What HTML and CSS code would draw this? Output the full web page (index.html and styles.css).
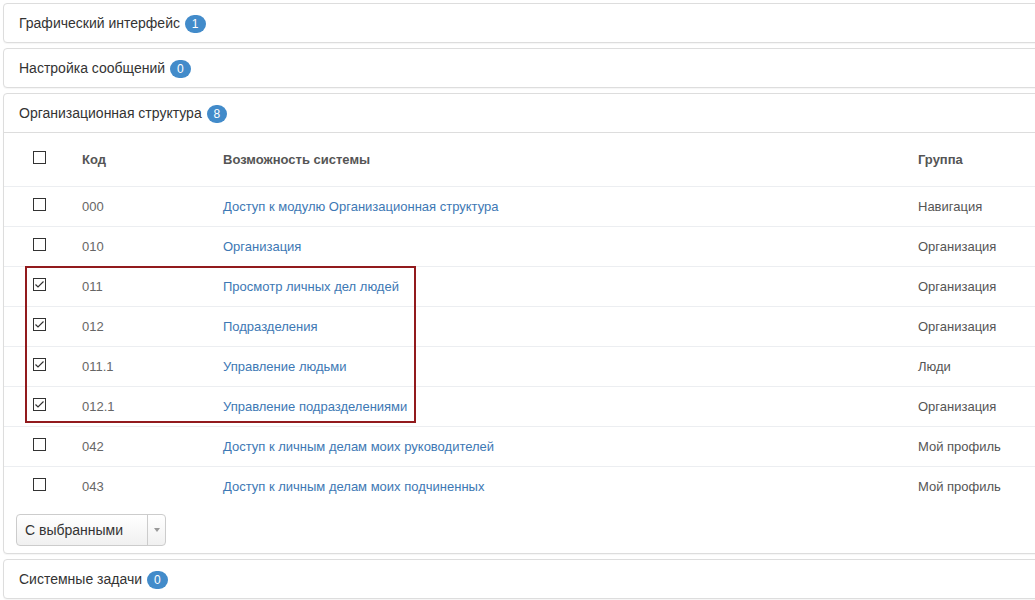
FILE: index.html
```html
<!DOCTYPE html>
<html lang="ru">
<head>
    <meta charset="UTF-8">
    <title>Возможности системы</title>
    <link rel="stylesheet" href="styles.css">
</head>
<body>
    <div class="panel-group">
        <div class="panel">
            <div class="panel-heading">Графический интерфейс <span class="badge">1</span></div>
        </div>
        <div class="panel">
            <div class="panel-heading">Настройка сообщений <span class="badge">0</span></div>
        </div>
        <div class="panel panel-open">
            <div class="panel-heading">Организационная структура <span class="badge">8</span></div>
            <table class="rights">
                <thead>
                    <tr>
                        <th class="col-check"><span class="box"></span></th>
                        <th class="col-code">Код</th>
                        <th class="col-name">Возможность системы</th>
                        <th>Группа</th>
                    </tr>
                </thead>
                <tbody>
                    <tr>
                        <td class="col-check"><span class="box"></span></td>
                        <td class="code">000</td>
                        <td><a href="#">Доступ к модулю Организационная структура</a></td>
                        <td class="group">Навигация</td>
                    </tr>
                    <tr>
                        <td class="col-check"><span class="box"></span></td>
                        <td class="code">010</td>
                        <td><a href="#">Организация</a></td>
                        <td class="group">Организация</td>
                    </tr>
                    <tr>
                        <td class="col-check"><span class="box checked"><svg viewBox="0 0 13 13" width="13" height="13"><path d="M2.5 6.5 L5 9 L10.5 3.5" fill="none" stroke="#333" stroke-width="1.2"/></svg></span></td>
                        <td class="code">011</td>
                        <td><a href="#">Просмотр личных дел людей</a></td>
                        <td class="group">Организация</td>
                    </tr>
                    <tr>
                        <td class="col-check"><span class="box checked"><svg viewBox="0 0 13 13" width="13" height="13"><path d="M2.5 6.5 L5 9 L10.5 3.5" fill="none" stroke="#333" stroke-width="1.2"/></svg></span></td>
                        <td class="code">012</td>
                        <td><a href="#">Подразделения</a></td>
                        <td class="group">Организация</td>
                    </tr>
                    <tr>
                        <td class="col-check"><span class="box checked"><svg viewBox="0 0 13 13" width="13" height="13"><path d="M2.5 6.5 L5 9 L10.5 3.5" fill="none" stroke="#333" stroke-width="1.2"/></svg></span></td>
                        <td class="code">011.1</td>
                        <td><a href="#">Управление людьми</a></td>
                        <td class="group">Люди</td>
                    </tr>
                    <tr>
                        <td class="col-check"><span class="box checked"><svg viewBox="0 0 13 13" width="13" height="13"><path d="M2.5 6.5 L5 9 L10.5 3.5" fill="none" stroke="#333" stroke-width="1.2"/></svg></span></td>
                        <td class="code">012.1</td>
                        <td><a href="#">Управление подразделениями</a></td>
                        <td class="group">Организация</td>
                    </tr>
                    <tr>
                        <td class="col-check"><span class="box"></span></td>
                        <td class="code">042</td>
                        <td><a href="#">Доступ к личным делам моих руководителей</a></td>
                        <td class="group">Мой профиль</td>
                    </tr>
                    <tr>
                        <td class="col-check"><span class="box"></span></td>
                        <td class="code">043</td>
                        <td><a href="#">Доступ к личным делам моих подчиненных</a></td>
                        <td class="group">Мой профиль</td>
                    </tr>
                </tbody>
            </table>
            <div class="selected-actions">
                <button class="split-btn">
                    <span class="split-label">С выбранными</span>
                    <span class="split-caret"></span>
                </button>
            </div>
            <div class="highlight"></div>
        </div>
        <div class="panel">
            <div class="panel-heading">Системные задачи <span class="badge">0</span></div>
        </div>
    </div>
</body>
</html>
```

FILE: styles.css
```css
body{
    margin: 0;
    padding: 3px 0 0 3px;
    overflow: hidden;
    background-color: #fff;
    font-family: "Liberation Sans", Arial, sans-serif;
    color: #333;
}
.panel-group{
    width: 1045px;
}
.panel{
    position: relative;
    border: 1px solid #ddd;
    border-radius: 4px;
    background-color: #fff;
    margin-bottom: 5px;
    box-shadow: 0 1px 1px rgba(0, 0, 0, 0.04);
}
.panel-heading{
    padding: 10px 15px;
    font-size: 14px;
    line-height: 18px;
    height: 18px;
}
.panel-open .panel-heading{
    border-bottom: 1px solid #ddd;
}
.badge{
    display: inline-block;
    min-width: 6px;
    padding: 3px 7px;
    margin-left: 1px;
    font-size: 12px;
    line-height: 12px;
    font-weight: normal;
    color: #fff;
    background-color: #428bca;
    border-radius: 10px;
    text-align: center;
    vertical-align: 0;
}
.rights{
    width: 100%;
    border-collapse: collapse;
    table-layout: fixed;
    font-size: 13px;
}
.rights th{
    height: 53px;
    padding: 0 8px;
    text-align: left;
    font-weight: bold;
    color: #555;
    vertical-align: middle;
}
.rights td{
    height: 39px;
    padding: 0 8px;
    border-top: 1px solid #eceef1;
    color: #555;
    vertical-align: middle;
}
.rights .col-check{
    width: 70px;
    padding: 0 0 0 29px;
    box-sizing: border-box;
}
.rights .col-code{
    width: 141px;
    box-sizing: border-box;
}
.rights .col-name{
    width: 695px;
    box-sizing: border-box;
}
.rights th .box{
    margin-top: -4px;
}
.rights td .box{
    margin-top: -4px;
}
.rights .code{
    color: #666;
}
.rights a{
    color: #3d78b4;
    text-decoration: none;
}
.box{
    display: block;
    width: 11px;
    height: 11px;
    border: 1px solid #333;
    background-color: #fff;
    position: relative;
}
.box svg{
    position: absolute;
    left: -1px;
    top: -1px;
}
.selected-actions{
    padding: 8px 12px 7px;
}
.split-btn{
    display: flex;
    align-items: stretch;
    width: 150px;
    height: 32px;
    padding: 0;
    border: 1px solid #ccc;
    border-radius: 4px;
    background: linear-gradient(#fff, #f0f0f0);
    font-family: "Liberation Sans", Arial, sans-serif;
    font-size: 14px;
    color: #333;
    cursor: pointer;
}
.split-label{
    flex: 1;
    text-align: left;
    padding-left: 8px;
    line-height: 30px;
    border-right: 1px solid #ccc;
}
.split-caret{
    width: 17px;
    position: relative;
}
.split-caret::after{
    content: "";
    position: absolute;
    left: 6px;
    top: 13px;
    border-left: 3px solid transparent;
    border-right: 3px solid transparent;
    border-top: 4px solid #999;
}
.highlight{
    position: absolute;
    left: 21px;
    top: 172px;
    width: 387px;
    height: 153px;
    border: 2px solid #921a1d;
}
```
